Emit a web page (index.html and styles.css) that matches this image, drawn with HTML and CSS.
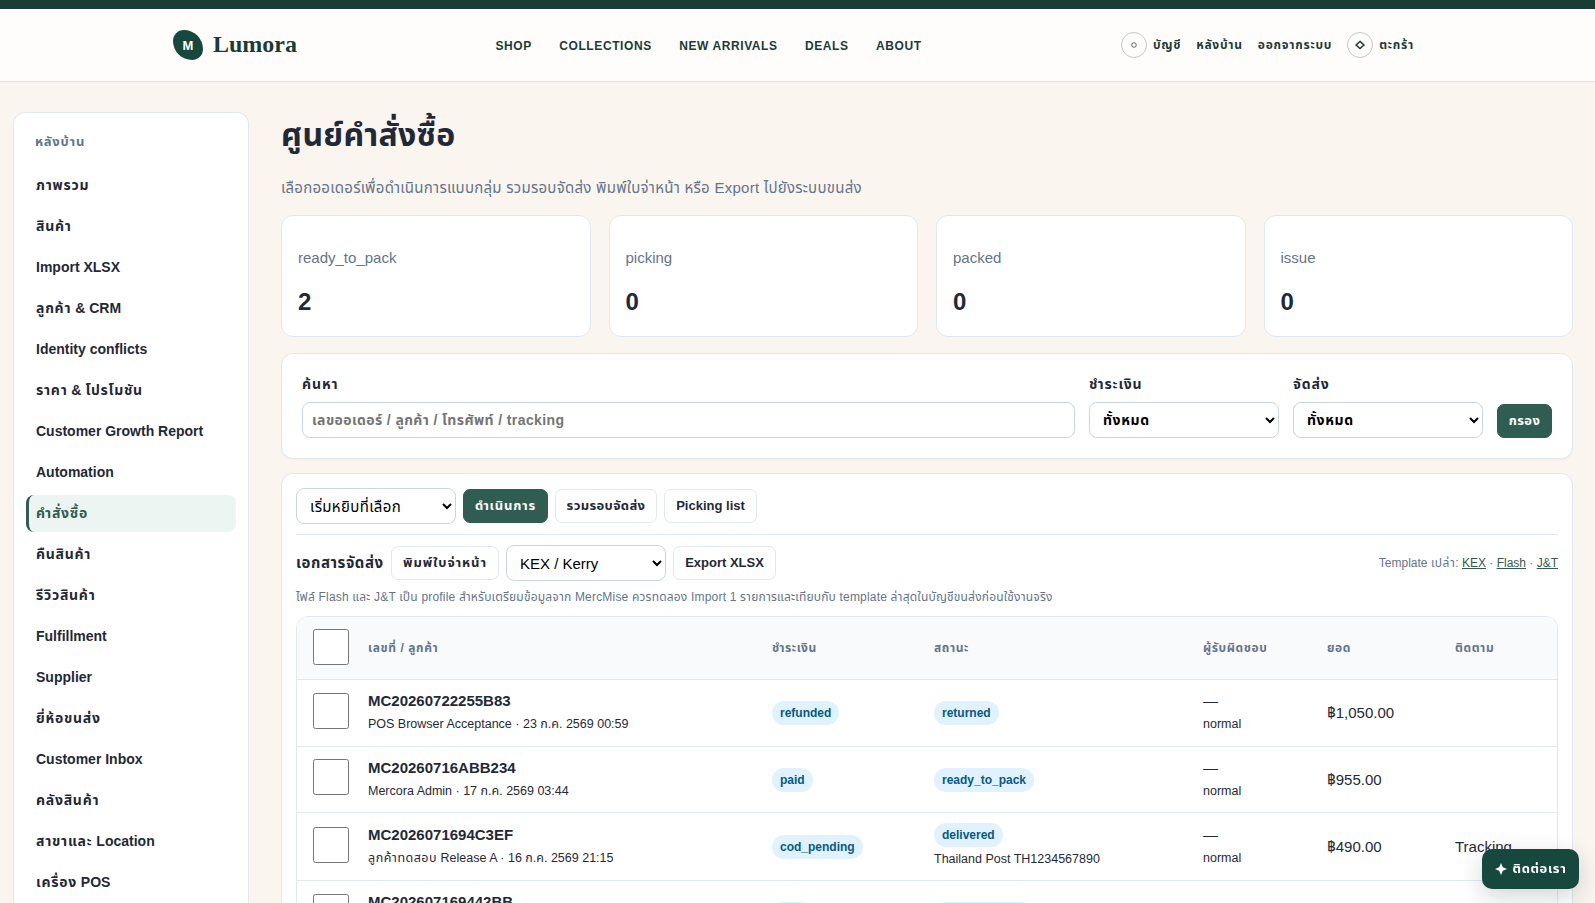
FILE: index.html
```html
<!DOCTYPE html>
<html lang="th">
<head>
    <meta charset="UTF-8">
    <meta name="viewport" content="width=device-width, initial-scale=1.0">
    <title>ศูนย์คำสั่งซื้อ | Lumora</title>
    <link rel="stylesheet" href="styles.css">
</head>
<body>
<div class="topbar"></div>
<header class="site-header">
    <a class="brand" href="#"><span class="brand-mark">M</span><span class="brand-name">Lumora</span></a>
    <nav class="main-nav">
        <a href="#">SHOP</a>
        <a href="#">COLLECTIONS</a>
        <a href="#">NEW ARRIVALS</a>
        <a href="#">DEALS</a>
        <a href="#">ABOUT</a>
    </nav>
    <div class="header-actions">
        <a href="#"><span class="circle"><svg width="6" height="6" viewBox="0 0 6 6"><circle cx="3" cy="3" r="2.3" fill="none" stroke="currentColor" stroke-width=".7"/></svg></span><span class="th">บัญชี</span></a>
        <a href="#"><span class="th">หลังบ้าน</span></a>
        <a href="#"><span class="th">ออกจากระบบ</span></a>
        <a href="#"><span class="circle"><svg width="10" height="10" viewBox="0 0 10 10"><path d="M5 1.4 8.9 5 5 8.6 1.1 5Z" fill="none" stroke="currentColor" stroke-width="1.5"/></svg></span><span class="th">ตะกร้า</span></a>
    </div>
</header>
<div class="layout">
    <aside class="sidebar">
        <div class="sidebar-title"><span class="th">หลังบ้าน</span></div>
        <a href="#"><span class="th">ภาพรวม</span></a>
        <a href="#"><span class="th">สินค้า</span></a>
        <a href="#">Import XLSX</a>
        <a href="#"><span class="th">ลูกค้า</span>&nbsp;&amp; CRM</a>
        <a href="#">Identity conflicts</a>
        <a href="#"><span class="th">ราคา</span>&nbsp;&amp;&nbsp;<span class="th">โปรโมชัน</span></a>
        <a href="#">Customer Growth Report</a>
        <a href="#">Automation</a>
        <a class="active" href="#"><span class="th">คำสั่งซื้อ</span></a>
        <a href="#"><span class="th">คืนสินค้า</span></a>
        <a href="#"><span class="th">รีวิวสินค้า</span></a>
        <a href="#">Fulfillment</a>
        <a href="#">Supplier</a>
        <a href="#"><span class="th">ยี่ห้อขนส่ง</span></a>
        <a href="#">Customer Inbox</a>
        <a href="#"><span class="th">คลังสินค้า</span></a>
        <a href="#"><span class="th">สาขาและ</span>&nbsp;Location</a>
        <a href="#"><span class="th">เครื่อง</span>&nbsp;POS</a>
    </aside>
    <main>
        <h1>ศูนย์คำสั่งซื้อ</h1>
        <p class="lead">เลือกออเดอร์เพื่อดำเนินการแบบกลุ่ม รวมรอบจัดส่ง พิมพ์ใบจ่าหน้า หรือ Export ไปยังระบบขนส่ง</p>
        <div class="stats">
            <div class="card"><p>ready_to_pack</p><strong>2</strong></div>
            <div class="card"><p>picking</p><strong>0</strong></div>
            <div class="card"><p>packed</p><strong>0</strong></div>
            <div class="card"><p>issue</p><strong>0</strong></div>
        </div>
        <form class="filter">
            <label class="grow"><span>ค้นหา</span><input type="text" placeholder="เลขออเดอร์ / ลูกค้า / โทรศัพท์ / tracking"></label>
            <label><span>ชำระเงิน</span><select><option>ทั้งหมด</option></select></label>
            <label><span>จัดส่ง</span><select><option>ทั้งหมด</option></select></label>
            <button type="button" class="btn primary btn-filter">กรอง</button>
        </form>
        <section class="orders">
            <div class="toolbar">
                <select class="th-select"><option>เริ่มหยิบที่เลือก</option></select>
                <button type="button" class="btn primary btn-run">ดำเนินการ</button>
                <button type="button" class="btn btn-batch">รวมรอบจัดส่ง</button>
                <button type="button" class="btn btn-picking">Picking list</button>
            </div>
            <div class="toolbar docs">
                <strong>เอกสารจัดส่ง</strong>
                <button type="button" class="btn btn-label">พิมพ์ใบจ่าหน้า</button>
                <select><option>KEX / Kerry</option></select>
                <button type="button" class="btn btn-export">Export XLSX</button>
                <span class="templates">Template <span class="th">เปล่า</span>: <a href="#">KEX</a> · <a href="#">Flash</a> · <a href="#">J&amp;T</a></span>
            </div>
            <p class="note">ไฟล์ Flash และ J&amp;T เป็น profile สำหรับเตรียมข้อมูลจาก MercMise ควรทดลอง Import 1 รายการและเทียบกับ template ล่าสุดในบัญชีขนส่งก่อนใช้งานจริง</p>
            <div class="table-wrap">
                <table>
                    <colgroup><col class="c-check"><col class="c-order"><col class="c-pay"><col class="c-status"><col class="c-owner"><col class="c-total"><col></colgroup>
                    <thead>
                    <tr><th><input type="checkbox"></th><th>เลขที่ / ลูกค้า</th><th>ชำระเงิน</th><th>สถานะ</th><th>ผู้รับผิดชอบ</th><th>ยอด</th><th>ติดตาม</th></tr>
                    </thead>
                    <tbody>
                    <tr>
                        <td><input type="checkbox"></td>
                        <td><strong>MC20260722255B83</strong><small>POS Browser Acceptance · 23 ก.ค. 2569 00:59</small></td>
                        <td><span class="badge">refunded</span></td>
                        <td><span class="badge">returned</span></td>
                        <td>—<small>normal</small></td>
                        <td>฿1,050.00</td>
                        <td></td>
                    </tr>
                    <tr>
                        <td><input type="checkbox"></td>
                        <td><strong>MC20260716ABB234</strong><small>Mercora Admin · 17 ก.ค. 2569 03:44</small></td>
                        <td><span class="badge">paid</span></td>
                        <td><span class="badge">ready_to_pack</span></td>
                        <td>—<small>normal</small></td>
                        <td>฿955.00</td>
                        <td></td>
                    </tr>
                    <tr class="tall">
                        <td><input type="checkbox"></td>
                        <td><strong>MC2026071694C3EF</strong><small><span class="th">ลูกค้าทดสอบ</span> Release A · 16 ก.ค. 2569 21:15</small></td>
                        <td><span class="badge">cod_pending</span></td>
                        <td><span class="badge">delivered</span><small>Thailand Post TH1234567890</small></td>
                        <td>—<small>normal</small></td>
                        <td>฿490.00</td>
                        <td>Tracking</td>
                    </tr>
                    <tr>
                        <td><input type="checkbox"></td>
                        <td><strong>MC202607169442BB</strong><small>&nbsp;</small></td>
                        <td><span class="badge">paid</span></td>
                        <td><span class="badge">ready_to_pack</span></td>
                        <td></td>
                        <td></td>
                        <td></td>
                    </tr>
                    </tbody>
                </table>
            </div>
        </section>
    </main>
</div>
<a class="contact" href="#"><svg width="12" height="12" viewBox="0 0 12 12"><path d="M6 0 7.8 4.2 12 6 7.8 7.8 6 12 4.2 7.8 0 6 4.2 4.2Z" fill="currentColor"/></svg><span>ติดต่อเรา</span></a>
</body>
</html>
```
FILE: styles.css
```css
* {
    box-sizing: border-box;
}

body {
    margin: 0;
    height: 100vh;
    overflow: hidden;
    background: #faf5ef;
    color: #1f2937;
    font-family: "Liberation Sans", Arial, "Noto Sans Thai", sans-serif;
    font-size: 15px;
}

a {
    color: inherit;
    text-decoration: none;
}

.topbar {
    height: 9px;
    background: #1a3c36;
}

.site-header {
    height: 73px;
    padding: 0 181px 0 173px;
    display: flex;
    align-items: center;
    background: #fffdfb;
    border-bottom: 1px solid #dfe2e0;
    color: #1a3c36;
}

.brand {
    display: flex;
    align-items: center;
    gap: 10px;
    width: 322.5px;
}

.brand-mark {
    width: 30px;
    height: 30px;
    display: grid;
    place-items: center;
    border-radius: 36% 64% 36% 64%;
    background: #17483d;
    color: #fff;
    font-size: 13px;
    font-weight: bold;
}

.brand-name {
    padding-bottom: 1px;
    font-family: Georgia, "Liberation Serif", serif;
    font-size: 24px;
    font-weight: bold;
}

.main-nav {
    display: flex;
    gap: 27.3px;
    padding-top: 1px;
    font-size: 12px;
    font-weight: bold;
    letter-spacing: 0.6px;
}

.header-actions {
    margin-left: auto;
    display: flex;
    align-items: center;
    gap: 15px;
    font-size: 12px;
    font-weight: bold;
}

.header-actions .th {
    letter-spacing: 0.75px;
}

.header-actions a {
    display: flex;
    align-items: center;
    gap: 6px;
    white-space: nowrap;
}

.circle {
    width: 26px;
    height: 26px;
    display: grid;
    place-items: center;
    border: 1px solid #c2cac7;
    border-radius: 50%;
}

.layout {
    display: grid;
    grid-template-columns: 236px 1292px;
    gap: 32px;
    padding: 30px 13px 0;
}

.sidebar {
    height: 800px;
    padding: 12px;
    display: flex;
    flex-direction: column;
    gap: 4px;
    background: #fff;
    border: 1px solid #e2e8f0;
    border-bottom: 0;
    border-radius: 12px 12px 0 0;
}

.sidebar a {
    flex: none;
    height: 37px;
    padding: 0 0 2px 7px;
    display: flex;
    align-items: center;
    border-left: 3px solid transparent;
    border-radius: 8px;
    font-size: 14px;
    font-weight: bold;
    line-height: 18px;
}

.sidebar .th {
    letter-spacing: 0.75px;
}

.sidebar a.active {
    background: #ecf5f2;
    border-left-color: #2f5d52;
    color: #2f5d52;
}

.sidebar-title {
    flex: none;
    height: 38px;
    padding: 7px 9px;
    color: #64748b;
    font-size: 13px;
    font-weight: bold;
}

h1 {
    margin: 0;
    height: 46px;
    line-height: 46px;
    font-size: 32px;
    letter-spacing: 0.3px;
    white-space: nowrap;
}

.lead {
    margin: 18px 0 15px;
    height: 24px;
    line-height: 24px;
    color: #64748b;
    letter-spacing: 0.26px;
    white-space: nowrap;
}

.stats {
    display: grid;
    grid-template-columns: repeat(4, 1fr);
    gap: 18px;
}

.card {
    height: 122px;
    padding: 32px 16px 0;
    background: #fff;
    border: 1px solid #e2e8f0;
    border-radius: 12px;
}

.card p {
    margin: 0 0 19px;
    line-height: 20px;
    color: #64748b;
}

.card strong {
    display: block;
    font-size: 24px;
    line-height: 30px;
}

.filter {
    height: 106px;
    margin: 16px 0 14px;
    padding: 20px;
    display: flex;
    align-items: flex-end;
    gap: 14px;
    background: #fff;
    border: 1px solid #e2e8f0;
    border-radius: 12px;
    box-shadow: 0 1px 2px rgba(15, 23, 42, 0.04);
}

.filter label {
    width: 190px;
    font-size: 14px;
    font-weight: bold;
}

.filter label.grow {
    flex: 1;
}

.filter label span {
    display: block;
    height: 29px;
    line-height: 22px;
    letter-spacing: 0.9px;
}

input[type="text"],
select {
    display: block;
    width: 100%;
    height: 36px;
    background: #fff;
    border: 1px solid #cbd5e1;
    border-radius: 8px;
    font: inherit;
}

input[type="text"] {
    padding: 0 9px;
    letter-spacing: 0.39px;
}

select {
    padding: 0 9px;
    color: #000;
}

.filter select {
    letter-spacing: 0.6px;
}

.th-select {
    letter-spacing: 0.35px;
}

.btn {
    height: 34px;
    padding: 0 0 1px;
    background: #fff;
    border: 1px solid #e2e8f0;
    border-radius: 7px;
    color: #1f2937;
    font-family: inherit;
    font-size: 13px;
    font-weight: bold;
    white-space: nowrap;
}

.btn.primary {
    background: #2f5d52;
    border-color: #2f5d52;
    color: #fff;
}

.btn-filter {
    width: 55px;
    letter-spacing: 0.4px;
}

.btn-run {
    width: 85px;
    letter-spacing: 0.8px;
}

.btn-batch {
    width: 102px;
    letter-spacing: 0.35px;
}

.btn-picking {
    width: 93px;
}

.btn-label {
    width: 108px;
    letter-spacing: 0.9px;
}

.btn-export {
    width: 103px;
}

.orders {
    height: 439px;
    padding: 14px 14px 0;
    background: #fff;
    border: 1px solid #e2e8f0;
    border-bottom: 0;
    border-radius: 12px 12px 0 0;
    overflow: hidden;
}

.toolbar {
    height: 47px;
    padding-bottom: 10px;
    display: flex;
    align-items: center;
    gap: 7px;
    border-bottom: 1px solid #e2e8f0;
}

.toolbar select {
    width: 160px;
}

.docs {
    height: 56px;
    padding: 0;
    border: 0;
}

.docs strong {
    width: 88px;
    font-size: 15px;
    letter-spacing: 0.55px;
    white-space: nowrap;
}

.templates {
    margin-left: auto;
    color: #64748b;
    font-size: 12px;
}

.templates .th {
    letter-spacing: 0.5px;
}

.templates a {
    color: #2f5d52;
    text-decoration: underline;
}

.note {
    margin: 0;
    height: 25px;
    line-height: 12px;
    color: #64748b;
    font-size: 12px;
    letter-spacing: 0.19px;
    white-space: nowrap;
}

.table-wrap {
    border: 1px solid #e2e8f0;
    border-radius: 12px;
    overflow: hidden;
}

table {
    width: 100%;
    table-layout: fixed;
    border-collapse: separate;
    border-spacing: 0;
}

.c-check { width: 55px; }
.c-order { width: 404px; }
.c-pay { width: 162px; }
.c-status { width: 269px; }
.c-owner { width: 124px; }
.c-total { width: 128px; }

th,
td {
    height: 66.5px;
    padding: 0 0 0 16px;
    border-bottom: 1px solid #e2e8f0;
    line-height: 23px;
    text-align: left;
    vertical-align: middle;
    white-space: nowrap;
}

th {
    height: 63px;
    background: #f8fafc;
    color: #64748b;
    font-size: 12px;
    letter-spacing: 0.6px;
}

.tall td {
    height: 68px;
}

td strong {
    display: block;
    line-height: 23px;
}

td small {
    display: block;
    font-size: 12.5px;
    line-height: 24px;
}

small .th {
    letter-spacing: 0.5px;
}

input[type="checkbox"] {
    display: block;
    width: 36px;
    height: 36px;
    margin: 0 0 2px;
}

td input[type="checkbox"] {
    margin-bottom: 4px;
}

.badge {
    display: inline-block;
    height: 24px;
    padding: 0 8px;
    border-radius: 12px;
    background: #e0f2fe;
    color: #075985;
    font-size: 12px;
    font-weight: bold;
    line-height: 24px;
    vertical-align: middle;
}

.contact {
    position: fixed;
    right: 16px;
    bottom: 14px;
    width: 97px;
    height: 40px;
    display: flex;
    align-items: center;
    justify-content: center;
    gap: 6px;
    border-radius: 10px;
    background: #17483d;
    box-shadow: 0 8px 24px rgba(15, 23, 42, 0.18);
    color: #fff;
    font-size: 13px;
    font-weight: bold;
    letter-spacing: 0.6px;
    white-space: nowrap;
}
```
